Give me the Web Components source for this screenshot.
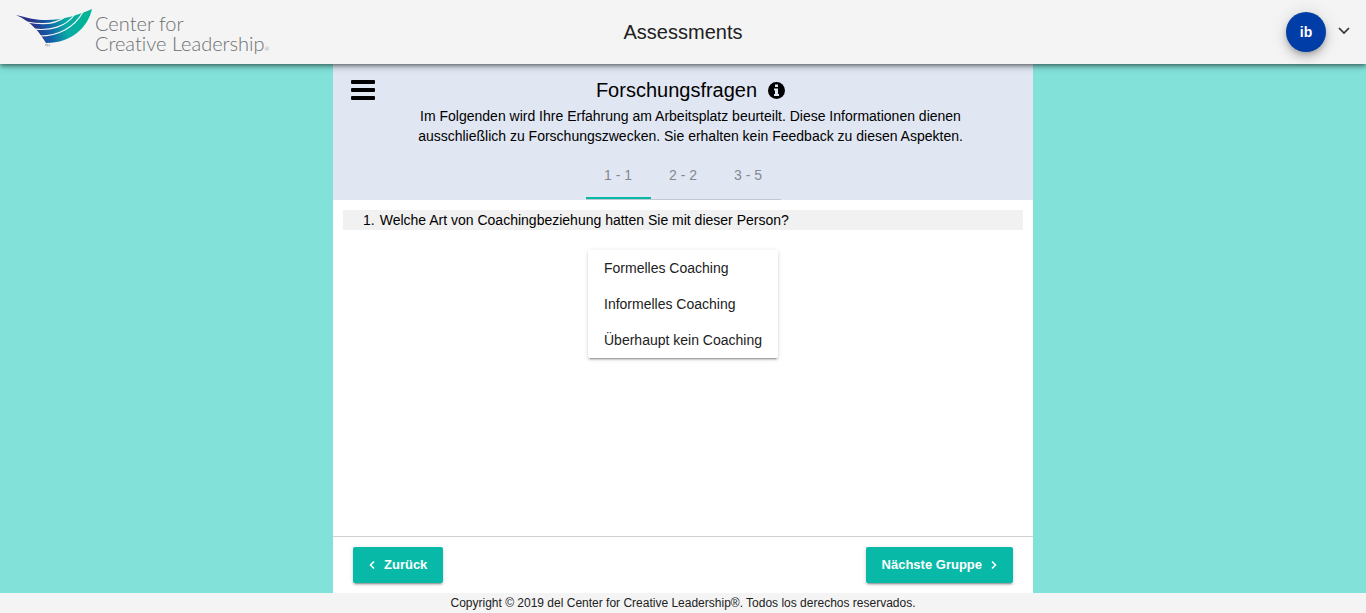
<!DOCTYPE html>
<html lang="de">
<head>
<meta charset="utf-8">
<meta name="viewport" content="width=device-width, initial-scale=1">
<title>Assessments</title>
<style>
  html, body { margin: 0; height: 100%; }
  body { font: 14px/20px "Liberation Sans", Arial, sans-serif; color: #000; background: #82e2da; }
</style>
</head>
<body>
<assessment-app>
  <app-header slot="header" heading="Assessments" initials="ib"></app-header>
  <section-intro slot="intro" heading="Forschungsfragen">
    Im Folgenden wird Ihre Erfahrung am Arbeitsplatz beurteilt. Diese Informationen dienen ausschließlich zu Forschungszwecken. Sie erhalten kein Feedback zu diesen Aspekten.
    <group-tabs slot="tabs" items="1 - 1|2 - 2|3 - 5"></group-tabs>
  </section-intro>
  <question-item number="1.">
    Welche Art von Coachingbeziehung hatten Sie mit dieser Person?
    <option-list slot="answers" items="Formelles Coaching|Informelles Coaching|Überhaupt kein Coaching"></option-list>
  </question-item>
  <nav-button slot="actions" direction="back">Zurück</nav-button>
  <nav-button slot="actions" direction="next">Nächste Gruppe</nav-button>
  <span slot="copyright">Copyright © 2019 del Center for Creative Leadership®. Todos los derechos reservados.</span>
</assessment-app>

<script>
  class BaseElement extends HTMLElement {
    connectedCallback() {
      if (!this.shadowRoot) this.attachShadow({ mode: 'open' }).innerHTML = this.render();
    }
    get items() { return this.getAttribute('items').split('|'); }
  }

  customElements.define('assessment-app', class extends BaseElement {
    render() {
      return `<style>
        :host { display: flex; flex-direction: column; min-height: 100vh; }
        .header { position: relative; z-index: 1; }
        main { flex: 1; display: flex; flex-direction: column; box-sizing: border-box;
               width: 100%; max-width: 700px; margin: 0 auto; background: #fff; }
        .body { flex: 1; padding: 10px; }
        .actions { display: flex; justify-content: space-between; padding: 10px 20px; border-top: 1px solid #d0d0d0; }
        footer { background: #f4f4f4; color: #212121; font-size: 12px; text-align: center; }
      </style>
      <div class="header"><slot name="header"></slot></div>
      <main>
        <slot name="intro"></slot>
        <div class="body"><slot></slot></div>
        <div class="actions"><slot name="actions"></slot></div>
      </main>
      <footer><slot name="copyright"></slot></footer>`;
    }
  });

  customElements.define('ccl-logo', class extends BaseElement {
    render() {
      return `<style>
        :host { display: flex; gap: 3px; align-items: flex-start; color: #6c7072; }
        svg { width: 76px; height: 40px; flex: none; }
        .name { font: 300 20px/20px Lato, "Open Sans", sans-serif; font-variant-ligatures: none; padding-top: 4px; white-space: nowrap; }
        .name span { display: block; }
        small { font-size: 6px; line-height: 6px; }
      </style>
      <svg viewBox="0 0 76 40" aria-hidden="true">
        <defs>
          <linearGradient id="wing" gradientUnits="userSpaceOnUse" x1="16" y1="20" x2="70" y2="10">
            <stop offset="0" stop-color="#282f86"/><stop offset=".3" stop-color="#145da8"/>
            <stop offset=".62" stop-color="#08aaa5"/><stop offset="1" stop-color="#03b496"/>
          </linearGradient>
        </defs>
        <path fill="url(#wing)" d="M0 6 C12 9 20 11 30 11 C48 11 62 6 76 0 C72 18 56 34 30 34 C24 24 16 13 0 6Z"/>
        <path fill="none" stroke="#f4f4f4" stroke-width="1.2" d="M11 13 C26 16 40 15 49 8 M18 20 C34 22 50 18 59 5 M24 27 C42 27 58 19 67 3"/>
        <path fill="none" stroke="#8a8a8a" stroke-width=".5" d="M29 35.500h2M30 35.500v2M31.500 37.500v-2l1 1 1-1v2"/>
      </svg>
      <div class="name"><span>Center for</span><span>Creative Leadership<small>®</small></span></div>`;
    }
  });

  customElements.define('app-header', class extends BaseElement {
    render() {
      return `<style>
        :host { display: grid; grid-template-columns: 1fr auto 1fr; align-items: center; box-sizing: border-box;
                height: 64px; padding: 0 16px; background: #f4f4f4; color: #212121;
                box-shadow: 0 2px 4px -1px rgba(0,0,0,.2), 0 4px 5px rgba(0,0,0,.14), 0 1px 10px rgba(0,0,0,.12), 0 1px 4px rgba(0,0,0,.3); }
        a { text-decoration: none; justify-self: start; height: 46px; }
        h1 { margin: 0; font-size: 20px; line-height: 28px; font-weight: 400; }
        .user { justify-self: end; display: flex; align-items: center; gap: 12px; padding: 0; border: 0;
                background: none; font: bold 14px/20px "Liberation Sans", Arial, sans-serif; cursor: pointer; }
        .avatar { width: 40px; height: 40px; line-height: 40px; border-radius: 50%; background: #003da6; color: #fff;
                  box-shadow: 0 3px 5px -1px rgba(0,0,0,.2), 0 6px 10px rgba(0,0,0,.14), 0 1px 18px rgba(0,0,0,.12); }
      </style>
      <a href="#" aria-label="Startseite"><ccl-logo></ccl-logo></a>
      <h1>${this.getAttribute('heading')}</h1>
      <button class="user" type="button" aria-label="Benutzermenü">
        <span class="avatar">${this.getAttribute('initials')}</span>
        <svg width="12" height="12" viewBox="0 0 12 12" aria-hidden="true"><path d="M1 2 L6 7 L11 2" fill="none" stroke="#333" stroke-width="1.700"/></svg>
      </button>`;
    }
  });

  customElements.define('section-intro', class extends BaseElement {
    render() {
      return `<style>
        :host { display: block; background: #e0e7f3; }
        .top { display: grid; grid-template-columns: 24px 1fr; column-gap: 38px; align-items: start; padding: 14px 65px 0 18px; }
        button { display: block; padding: 0; border: 0; background: none; cursor: pointer; }
        button svg { display: block; }
        .menu { margin-top: 2px; }
        .text { text-align: center; }
        .title { display: flex; align-items: center; justify-content: center; gap: 11px; }
        h2 { margin: 0; font-size: 20px; line-height: 24px; font-weight: 400; }
        p { margin: 4px 0 0; }
      </style>
      <div class="top">
        <button class="menu" type="button" aria-label="Menü">
          <svg width="24" height="20" viewBox="0 0 24 20"><path d="M1 0h22q1 0 1 1v2q0 1-1 1H1q-1 0-1-1V1q0-1 1-1zM1 8h22q1 0 1 1v2q0 1-1 1H1q-1 0-1-1V9q0-1 1-1zM1 16h22q1 0 1 1v2q0 1-1 1H1q-1 0-1-1v-2q0-1 1-1z"/></svg>
        </button>
        <div class="text">
          <div class="title"><h2>${this.getAttribute('heading')}</h2>
            <button type="button" aria-label="Information">
              <svg width="17" height="17" viewBox="0 0 17 17"><circle cx="8.500" cy="8.500" r="8.500"/><path fill="#e0e7f3" d="M7 2.500h3v2.500H7zM6 6.500h4v5.500h1v2H6v-2h1V8.500H6z"/></svg>
            </button>
          </div>
          <p><slot></slot></p>
        </div>
      </div>
      <slot name="tabs"></slot>`;
    }
  });

  customElements.define('group-tabs', class extends BaseElement {
    render() {
      const tabs = this.items.map((t, i) => `<button role="tab" type="button" aria-selected="${i === 0}">${t}</button>`).join('');
      return `<style>
        :host { display: flex; justify-content: center; padding-top: 5px; }
        div { display: flex; border-bottom: 1px solid #c3c9d4; }
        button { width: 65px; height: 48px; padding: 0; border: 0;
                 background: none; color: #85898f; font: 14px/20px "Liberation Sans", Arial, sans-serif; cursor: pointer; }
        button[aria-selected="true"] { box-shadow: inset 0 -2px #08b9a8; }
      </style><div role="tablist">${tabs}</div>`;
    }
  });

  customElements.define('question-item', class extends BaseElement {
    render() {
      return `<style>
        :host { display: block; }
        .question { display: flex; gap: 5px; padding: 0 20px; background: #f1f1f1; }
        .answers { display: flex; justify-content: center; padding-top: 20px; }
      </style>
      <div class="question"><span>${this.getAttribute('number')}</span><span><slot></slot></span></div>
      <div class="answers"><slot name="answers"></slot></div>`;
    }
  });

  customElements.define('option-list', class extends BaseElement {
    render() {
      const rows = this.items.map(t => `<li><button type="button">${t}</button></li>`).join('');
      return `<style>
        :host { display: block; background: #fff; border-radius: 2px;
                box-shadow: 0 3px 1px -2px rgba(0,0,0,.2), 0 2px 2px rgba(0,0,0,.14), 0 1px 5px rgba(0,0,0,.12); }
        ul { margin: 0; padding: 0; list-style: none; }
        button { display: block; width: 100%; height: 36px; padding: 0 16px; border: 0; background: none; color: #212121;
                 text-align: left; font: 14px/36px "Liberation Sans", Arial, sans-serif; cursor: pointer; }
      </style><ul>${rows}</ul>`;
    }
  });

  customElements.define('nav-button', class extends BaseElement {
    render() {
      const back = this.getAttribute('direction') === 'back';
      const icon = `<svg width="6" height="10" viewBox="0 0 6 10" aria-hidden="true"><path d="${back ? 'M5 1.500 L1.500 5 L5 8.500' : 'M1 1.500 L4.500 5 L1 8.500'}" fill="none" stroke="#fff" stroke-width="1.600"/></svg>`;
      return `<style>
        :host { display: block; }
        button { display: flex; align-items: center; gap: 9px; height: 36px; padding: 0 16px; border: 0; border-radius: 2px;
                 background: #08b9a8; color: #fff; font: bold 13px/36px "Liberation Sans", Arial, sans-serif; cursor: pointer;
                 box-shadow: 0 3px 1px -2px rgba(0,0,0,.2), 0 2px 2px rgba(0,0,0,.14), 0 1px 5px rgba(0,0,0,.12); }
      </style>
      <button type="button">${back ? icon : ''}<slot></slot>${back ? '' : icon}</button>`;
    }
  });
</script>
</body>
</html>
